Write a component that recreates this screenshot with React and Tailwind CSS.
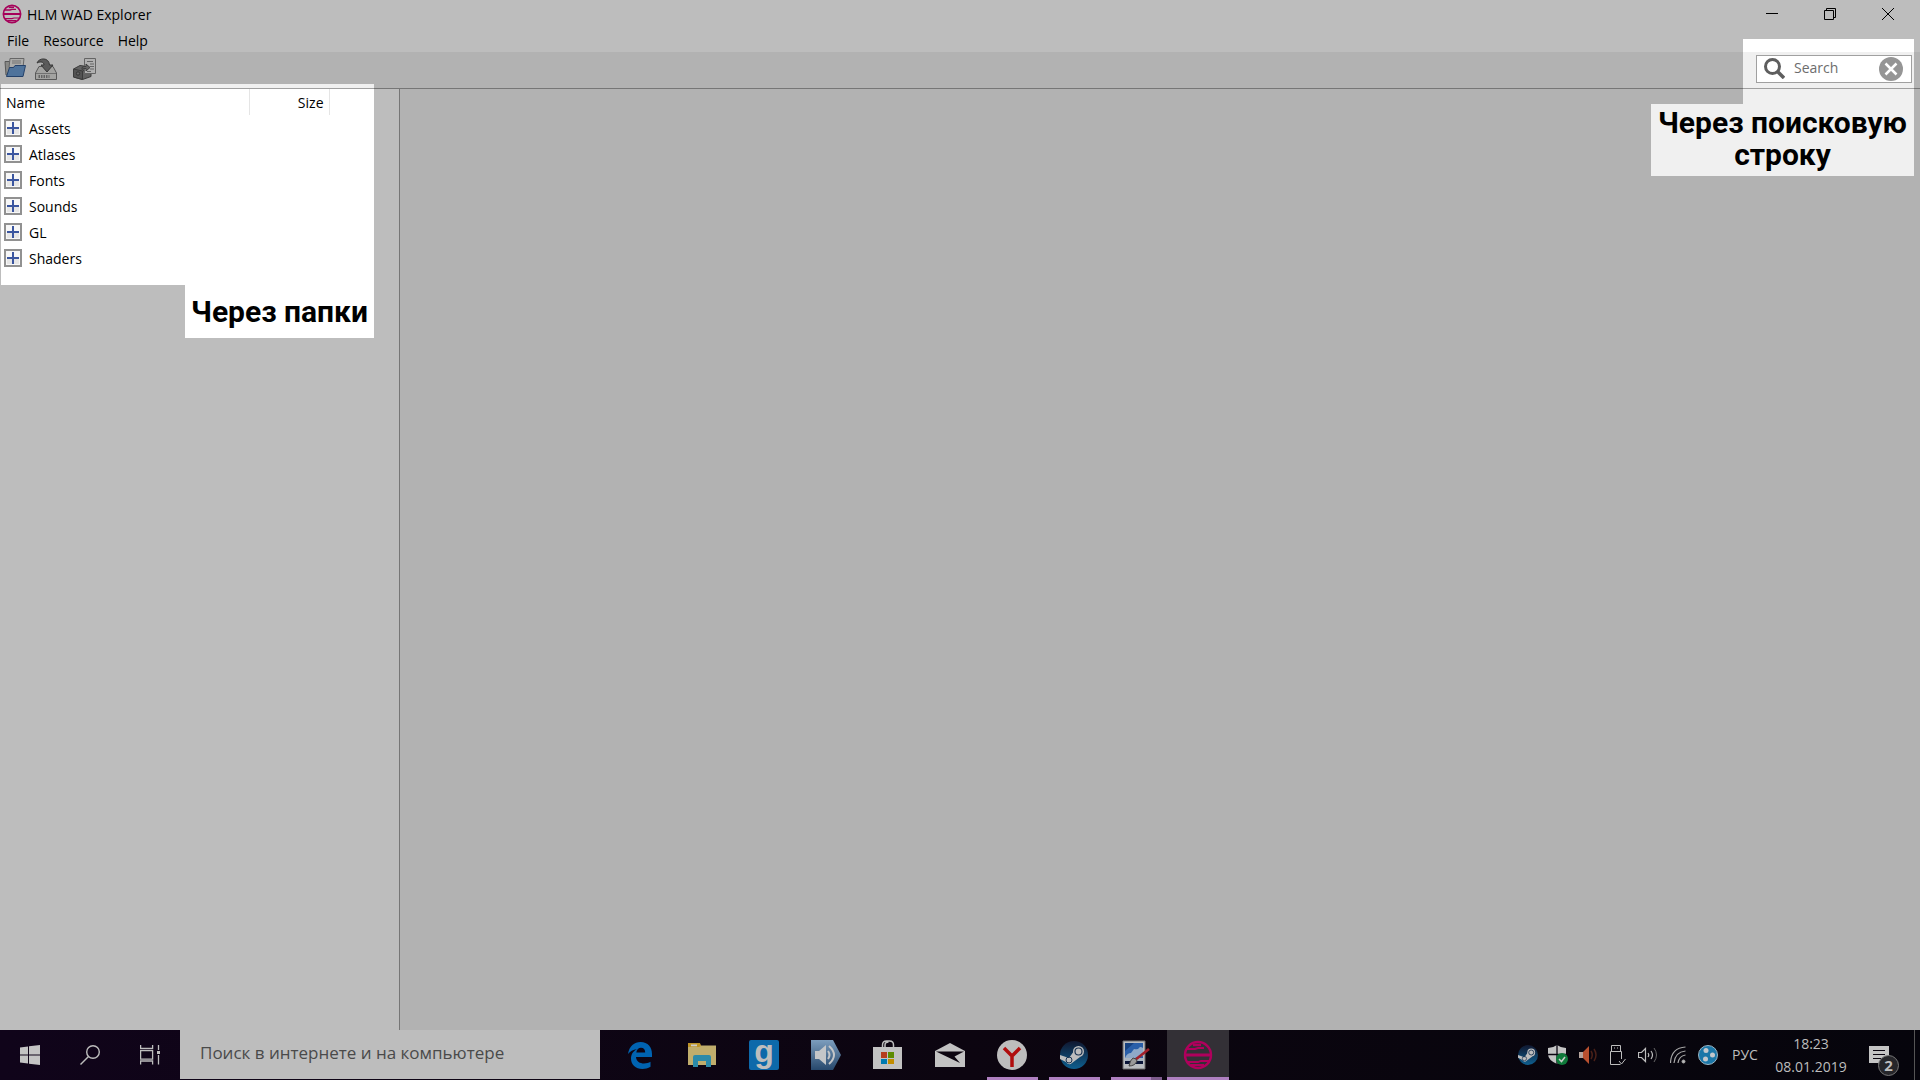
import React, { useState } from "react";

const folders = ["Assets", "Atlases", "Fonts", "Sounds", "GL", "Shaders"];

const LogoIcon = ({ className }) => (
  <svg viewBox="0 0 30 30" className={className} fill="none" stroke="currentColor">
    <circle cx="15" cy="15" r="13" strokeWidth="2.4" />
    <path d="M2 15h26" strokeWidth="3" />
    <path d="M4 9h8l3-1h6" strokeWidth="2" />
    <path d="M10 5h8" strokeWidth="2.4" />
    <path d="M4 22h11l3-1h8M8 25h13" strokeWidth="1.8" />
  </svg>
);

const OpenIcon = () => (
  <svg viewBox="0 0 22 20" className="h-5 w-[22px]">
    <path d="M1 3.500h6l1 2V17H2z" fill="#b9b9b5" stroke="#777" />
    <path d="M6 .5h14l-1 9H5z" fill="#e8e8e6" stroke="#8a8a8a" />
    <path d="M8 3h9M8 5h9" stroke="#999" />
    <path d="M5.500 9.500h4l1.500-2h10.500L19 18.500H2.500z" fill="#6b9bd2" stroke="#31588f" />
  </svg>
);

const SaveIcon = () => (
  <svg viewBox="0 0 22 22" className="size-[22px]">
    <path d="M4 8.500h14l3.500 6.500v6.500H.5V15z" fill="#dcdcda" stroke="#777" />
    <path d="M1 15.500h20" stroke="#999" />
    <path d="M3.500 18.500h11" stroke="#888" strokeWidth="3" strokeDasharray="1.500 1" />
    <path d="M2 5C4-.5 14-1 14.500 7H18l-6 7-6-7h3C9 4 6 3 2 5z" fill="#7b7b7b" stroke="#4c4c4c" />
  </svg>
);

const ExtractIcon = () => (
  <svg viewBox="0 0 23 22" className="h-[22px] w-[23px]">
    <path d="M.5 11L7 7.500l11 1.500v9.500L9.500 21.500.5 19z" fill="#858585" stroke="#505050" />
    <path d="M.5 11l9 2v8.500l-9-2.500z" fill="#707070" stroke="#505050" />
    <path d="M9.500 13L18 10.500" stroke="#505050" />
    <circle cx="5" cy="15.500" r="1.700" fill="#8a8a8a" stroke="#444" />
    <path d="M11.500.5h11v15h-11z" fill="#eee" stroke="#888" />
    <path d="M14 3.500h6M17 6h4M17 8.500h4M17 11h4M14 13.500h4" stroke="#888" />
    <path d="M9 9.500q2-1.500 4-1V6l4 3.500-4 3.500v-2.500q-2-.5-4 1z" fill="#888" stroke="#555" />
  </svg>
);

const PlusBox = () => (
  <svg viewBox="0 0 18 18" className="size-[18px]">
    <rect x="1" y="1" width="16" height="16" fill="#f7f7f7" stroke="#919191" strokeWidth="2" />
    <path d="M3 10h12v5H3z" fill="#e6e6e6" />
    <path d="M3 9h12M9 3v12" stroke="#3a559f" strokeWidth="2" />
  </svg>
);

const EdgeIcon = () => (
  <svg viewBox="0 0 24 27" className="h-[27px] w-6" fill="#0063b1">
    <path d="M0 12C1 4 6.500 0 12.500 0 20 0 24 5 24 12v3H8c.3 4.500 4 6.500 8 6.500 2.500 0 4.800-.7 6.500-1.700v5C20 26.300 17 27 14.500 27 7.500 27 3 22.500 3 16.500c0-4.500 2.500-7.500 6-9.500C5 7.500 2 9.500 0 12zm8.300-1.500h8.900c0-3-1.500-4.700-4.200-4.700-2.500 0-4.200 1.700-4.700 4.700z" />
  </svg>
);

const FolderIcon = () => (
  <svg viewBox="0 0 28 24" className="h-6 w-7">
    <path d="M0 0h11l2 2.500h15V22H0z" fill="#c0ad6c" />
    <path d="M0 0h12l1 3-2 1H0z" fill="#bd9327" />
    <path d="M3 1.500h6v1.800H3z" fill="#ccc" />
    <path d="M5 24V14q0-2 2-2h14q2 0 2 2v10h-5v-6h-8v6z" fill="#2b8aa9" />
  </svg>
);

const GmodIcon = () => (
  <span className="flex size-[30px] items-center justify-center rounded-xs bg-[#0d69aa] pb-2 font-['Liberation_Sans',sans-serif] text-[32px] leading-none font-bold text-[#bdbdbd]">
    g
  </span>
);

const VoiceIcon = () => (
  <svg viewBox="0 0 30 30" className="size-[30px]">
    <defs>
      <linearGradient id="voice" x1="0" y1="0" x2="0" y2="1">
        <stop offset="0" stopColor="#7c9dbd" />
        <stop offset="1" stopColor="#27486c" />
      </linearGradient>
    </defs>
    <path d="M0 0h22l8 15-8 15H0z" fill="url(#voice)" />
    <path d="M4 11h4l7-6v20l-7-6H4z" fill="#c4c6c8" />
    <path d="M17 11q3 4 0 8M18 6q10 9 0 18" fill="none" stroke="#c4c6c8" strokeWidth="2" />
  </svg>
);

const StoreIcon = () => (
  <svg viewBox="0 0 30 30" className="size-[30px]">
    <path d="M9.500 8V5q0-4 4-4h3q4 0 4 4v3M12 8V5q0-3 3.500-3" fill="none" stroke="#bdbdbd" strokeWidth="1.500" />
    <path d="M0 7h29v22H0z" fill="#c2c2c2" />
    <path d="M8 12h6v6H8z" fill="#b63c1d" />
    <path d="M15 12h6v6h-6z" fill="#5d8b00" />
    <path d="M8 19h6v5H8z" fill="#007ab0" />
    <path d="M15 19h6v5h-6z" fill="#c28c00" />
  </svg>
);

const MailIcon = () => (
  <svg viewBox="0 0 30 24" className="h-6 w-[30px]">
    <path d="M0 8L15 0l15 8v16H0z" fill="#c2c2c2" />
    <path d="M1 8.500h28l-9.500 5L25 20 1 8.500z" fill="#0c0510" />
  </svg>
);

const YandexIcon = () => (
  <svg viewBox="0 0 30 30" className="size-[30px]">
    <circle cx="15" cy="15" r="15" fill="#bdbdbd" />
    <path d="M7 8l8 8 8-8M15 15v12" fill="none" stroke="#b00d0d" strokeWidth="3.500" />
  </svg>
);

const SteamIcon = ({ className }) => (
  <svg viewBox="0 0 28 28" className={className}>
    <defs>
      <linearGradient id="steam" x1="0" y1="0" x2="0" y2="1">
        <stop offset="0" stopColor="#10172f" />
        <stop offset="1" stopColor="#0e5f8f" />
      </linearGradient>
    </defs>
    <circle cx="14" cy="14" r="14" fill="url(#steam)" />
    <path d="M0 14l9 3 5-7 6 6-8 6q-3 3-6-1l-6-3z" fill="#bdbdbd" />
    <circle cx="18.500" cy="10.500" r="5.500" fill="#bdbdbd" />
    <circle cx="18.500" cy="10.500" r="3.500" fill="#bdbdbd" stroke="#1a3352" strokeWidth="1.200" />
    <circle cx="9" cy="19" r="3" fill="none" stroke="#1a3352" />
  </svg>
);

const PaintIcon = () => (
  <svg viewBox="0 0 28 30" className="h-[30px] w-7">
    <path d="M1 1h22v28H1z" fill="#b9bcc0" stroke="#6c6c6c" />
    <path d="M3 3h18v18H3z" fill="#2a5fa8" />
    <path d="M3 3h9L3 11z" fill="#16417f" />
    <path d="M3 18q2-5 6-5l3-4q4 1 5-1t4 0v8q-5 0-8 2t-10 2z" fill="#8fa9c8" />
    <path d="M3 18h18v3H3z" fill="#a8b4c0" />
    <path d="M3 21h18v3H3z" fill="#0a1538" />
    <path d="M27 9L13 20" stroke="#a3202b" strokeWidth="2.600" />
    <path d="M14 19l-3-1q-3 2-4 8 6 0 8-5z" fill="#999" stroke="#444" />
  </svg>
);

const apps = [
  { name: "Edge", icon: <EdgeIcon /> },
  { name: "Explorer", icon: <FolderIcon /> },
  { name: "Garry's Mod", icon: <GmodIcon /> },
  { name: "Voice", icon: <VoiceIcon /> },
  { name: "Store", icon: <StoreIcon /> },
  { name: "Mail", icon: <MailIcon /> },
  { name: "Yandex", icon: <YandexIcon />, open: true },
  { name: "Steam", icon: <SteamIcon className="size-7" />, open: true },
  { name: "Paint", icon: <PaintIcon />, open: true, stacked: true },
  { name: "HLM WAD Explorer", icon: <LogoIcon className="size-[30px] text-[#b0005c]" />, active: true },
];

const trayIcons = [
  { name: "Steam", icon: <SteamIcon className="size-5" /> },
  {
    name: "Security",
    icon: (
      <svg viewBox="0 0 20 20" className="size-5">
        <path d="M0 3q5 0 9-3 4 3 9 3v6q0 6-9 10Q0 15 0 9z" fill="#c4c4c4" />
        <path d="M9 0v19M0 9.500h18" stroke="#0a0510" strokeWidth="1.300" />
        <circle cx="14" cy="14" r="6" fill="#0f7a3a" />
        <path d="M11 14l2.500 2.500L17 12" fill="none" stroke="#ccc" strokeWidth="1.500" />
      </svg>
    ),
  },
  {
    name: "Sound manager",
    icon: (
      <svg viewBox="0 0 20 20" className="size-5" fill="none">
        <path d="M1 7h4l6-6v18l-6-6H1z" fill="#b9502f" />
        <path d="M1 7h4v6H1z" fill="#b5a39c" />
        <path d="M13 6q2.500 4 0 8M16 4q4 6 0 12" stroke="#4a2018" strokeWidth="1.500" />
      </svg>
    ),
  },
  {
    name: "USB",
    icon: (
      <svg viewBox="0 0 16 20" className="h-5 w-4" fill="none" stroke="#bdbdbd">
        <path d="M1.500 6.500v-6h9v6M11.500 14V6.500H.5v13h10M4 3h1M7 3h1M9 16l2.500 3 4-5" />
      </svg>
    ),
  },
  {
    name: "Volume",
    icon: (
      <svg viewBox="0 0 20 20" className="size-5" fill="none" stroke="#bdbdbd">
        <path d="M.5 7.500h3l4-4v13l-4-4h-3zM10 8q1.500 2 0 4M13 6q3 4 0 8" strokeWidth="1.200" />
        <path d="M16 3q5 7 0 14" stroke="#666" />
      </svg>
    ),
  },
  {
    name: "Network",
    icon: (
      <svg viewBox="0 0 16 18" className="h-[18px] w-4" fill="none" stroke="#a8a8a8">
        <path d="M.5 17Q1 2 15.500 1M4 17Q5 6 15.500 5M8 17q1-7 7.500-8" strokeWidth="1.200" />
        <circle cx="13.500" cy="15.500" r="1.500" fill="#bdbdbd" />
      </svg>
    ),
  },
  {
    name: "Hamachi",
    icon: (
      <svg viewBox="0 0 20 20" className="size-5">
        <circle cx="10" cy="10" r="9.500" fill="#1b77a8" stroke="#9ab4c2" />
        <circle cx="8" cy="5.500" r="2.500" fill="#c4c8cc" />
        <circle cx="14.500" cy="10" r="2.500" fill="#c4c8cc" />
        <circle cx="7.500" cy="14" r="2.500" fill="#c4c8cc" />
      </svg>
    ),
  },
];

const TitleBar = () => (
  <header className="flex h-7 items-center bg-white pl-[2px]">
    <LogoIcon className="size-5 text-[#e0007a]" />
    <h1 className="ml-[5px] flex-1 pt-px text-sm">HLM WAD Explorer</h1>
    <div className="flex pr-[3px]">
      <button aria-label="Minimize" className="flex h-7 w-[58px] items-center justify-center">
        <svg viewBox="0 0 12 12" className="size-3" stroke="#000">
          <path d="M0 5.500h12" />
        </svg>
      </button>
      <button aria-label="Restore" className="flex h-7 w-[58px] items-center justify-center">
        <svg viewBox="0 0 12 12" className="size-3" fill="none" stroke="#000">
          <path d="M.5 2.500h9v9h-9zM2.500 2.500v-2h9v9h-2" />
        </svg>
      </button>
      <button aria-label="Close" className="flex h-7 w-[58px] items-center justify-center">
        <svg viewBox="0 0 12 12" className="size-3" stroke="#000">
          <path d="M0 0l12 12M12 0L0 12" />
        </svg>
      </button>
    </div>
  </header>
);

const Toolbar = () => {
  const [query, setQuery] = useState("");

  return (
    <div className="flex h-9 items-center bg-[#f0f0f0] pb-[2px] pl-1">
      <button aria-label="Open" className="pb-[2px]">
        <OpenIcon />
      </button>
      <button aria-label="Save" className="ml-[9px]">
        <SaveIcon />
      </button>
      <button aria-label="Extract" className="ml-4">
        <ExtractIcon />
      </button>
      <div className="mr-2 ml-auto flex h-7 w-[156px] items-center border border-[#a0a0a0] bg-white pr-2 pl-[7px]">
        <svg viewBox="0 0 21 21" className="mb-[2px] size-[21px] shrink-0" fill="none" stroke="#5e5e5e">
          <circle cx="8.500" cy="8.500" r="7" strokeWidth="3" />
          <path d="M13.500 13.500l6.500 6.500" strokeWidth="3.500" />
        </svg>
        <input
          type="text"
          aria-label="Search"
          placeholder="Search"
          value={query}
          onChange={(e) => setQuery(e.target.value)}
          className="ml-[9px] w-0 flex-1 bg-transparent pb-[2px] text-sm outline-none placeholder:text-[#6d6d6d]"
        />
        <button aria-label="Clear" onClick={() => setQuery("")}>
          <svg viewBox="0 0 24 24" className="size-6">
            <circle cx="12" cy="12" r="12" fill="#959595" />
            <path d="M6.500 6.500l11 11M17.500 6.500l-11 11" stroke="#fff" strokeWidth="2.500" />
          </svg>
        </button>
      </div>
    </div>
  );
};

const FolderTree = () => (
  <aside className="w-[400px] border-r border-[#a0a0a0] bg-white pl-px">
    <table className="w-full table-fixed text-sm">
      <thead>
        <tr className="h-[26px]">
          <th className="w-[248px] border-r border-[#e5e5e5] pt-[2px] pl-[5px] text-left font-normal">Name</th>
          <th className="w-20 border-r border-[#e5e5e5] pt-[2px] pr-[5px] text-right font-normal">Size</th>
          <th></th>
        </tr>
      </thead>
      <tbody>
        {folders.map((name) => (
          <tr key={name} className="h-[26px]">
            <td colSpan={3}>
              <button className="flex items-center gap-[7px] pl-[3px]">
                <PlusBox />
                <span className="pt-px">{name}</span>
              </button>
            </td>
          </tr>
        ))}
      </tbody>
    </table>
  </aside>
);

const Taskbar = () => (
  <footer className="flex h-[50px] bg-linear-to-r from-[#10041a] via-[#0c0510] to-[#06050c] text-[#bdbdbd]">
    <button aria-label="Start" className="flex w-[60px] items-center justify-center">
      <svg viewBox="0 0 20 20" className="size-5" fill="#c4c4c4">
        <path d="M0 2.500L8 1.400V9.500H0zM9 1.200L20 0v9.500H9zM0 10.500h8v8.100L0 17.500zM9 10.500h11V20L9 18.800z" />
      </svg>
    </button>
    <button aria-label="Find" className="flex w-[60px] items-center justify-center">
      <svg viewBox="0 0 20 20" className="size-5" fill="none" stroke="#bdbdbd" strokeWidth="1.400">
        <circle cx="13" cy="7" r="6.300" />
        <path d="M8.500 11.500L.5 19.500" />
      </svg>
    </button>
    <button aria-label="Task view" className="flex w-[60px] items-center justify-center">
      <svg viewBox="0 0 20 20" className="size-5" fill="none" stroke="#bdbdbd" strokeWidth="1.300">
        <path d="M.6 0v3.500h12V0M.6 5.600h12v8.500H.6zM.6 19.500V16h12v3.500M18.500 0v5M18.500 10v9.500" />
        <path d="M17 6h3v3h-3z" fill="#bdbdbd" stroke="none" />
      </svg>
    </button>
    <input
      type="text"
      aria-label="Поиск"
      placeholder="Поиск в интернете и на компьютере"
      className="mb-px w-[420px] bg-[#bdbdbd] px-5 pb-1 text-[17px] outline-none placeholder:text-[#4a4a4a]"
    />
    <nav className="ml-[9px] flex">
      {apps.map((app) => (
        <button
          key={app.name}
          aria-label={app.name}
          className={`flex w-[62px] flex-col items-center ${app.active ? "bg-[#333036]" : ""}`}
        >
          <span className="flex h-[47px] items-center justify-center pt-[3px]">{app.icon}</span>
          {app.active && <span className="h-[3px] w-full bg-[#ae7fc0]" />}
          {app.open && (
            <span className="flex h-[3px] w-[51px] bg-[#ae7fc0]">
              {app.stacked && <span className="ml-auto w-[11px] bg-[#7d5b8c]" />}
            </span>
          )}
        </button>
      ))}
    </nav>
    <div className="ml-auto flex items-center">
      {trayIcons.map((item) => (
        <button key={item.name} aria-label={item.name} className="flex w-[30px] justify-center">
          {item.icon}
        </button>
      ))}
      <span className="w-11 text-center text-sm">РУС</span>
      <div className="w-[88px] text-center text-sm leading-[23px]">
        <p>18:23</p>
        <p>08.01.2019</p>
      </div>
      <button aria-label="Notifications" className="mr-[15px] mb-1 ml-[14px] self-end">
        <svg viewBox="0 0 30 30" className="size-[30px]">
          <path d="M0 0h20v17h-7v4l-4-4H0z" fill="#c4c4c4" />
          <path d="M4 4.500h12M4 8.500h12M4 12.500h8" stroke="#0a0510" />
          <circle cx="19.500" cy="19.500" r="10" fill="#26262a" stroke="#777" />
          <text x="19.500" y="25" textAnchor="middle" fontSize="15" fontWeight="700" fill="#bdbdbd">
            2
          </text>
        </svg>
      </button>
      <span className="mr-[5px] h-[50px] w-px bg-[#555]" />
    </div>
  </footer>
);

// Darkens the window except for the folder list and the search box
const Dimmer = () => (
  <div className="pointer-events-none absolute inset-0 bg-black/26 [clip-path:polygon(evenodd,0_0,100%_0,100%_100%,0_100%,0_0,1px_84px,374px_84px,374px_338px,185px_338px,185px_285px,1px_285px,1px_84px,0_0,calc(100%-177px)_39px,calc(100%-6px)_39px,calc(100%-6px)_176px,calc(100%-269px)_176px,calc(100%-269px)_104px,calc(100%-177px)_104px,calc(100%-177px)_39px,0_0)]" />
);

const App = () => {
  return (
    <div className="flex min-h-screen flex-col font-['Open_Sans','Noto_Sans',sans-serif] text-black">
      <div className="relative flex flex-1 flex-col">
        <TitleBar />
        <nav className="flex h-6 items-center gap-[14px] bg-white pt-[2px] pl-[7px] text-sm leading-6">
          <button>File</button>
          <button>Resource</button>
          <button>Help</button>
        </nav>
        <Toolbar />
        <main className="flex flex-1 border-t border-[#a0a0a0]">
          <FolderTree />
          <section className="flex-1 bg-[#f0f0f0]" />
        </main>
        <Dimmer />
        <p className="absolute top-[285px] left-[185px] flex h-[53px] w-[189px] items-center justify-center font-[Roboto,sans-serif] text-[30px] font-bold whitespace-nowrap">
          Через папки
        </p>
        <p className="absolute top-[104px] right-[6px] w-[263px] pt-[3px] text-center font-[Roboto,sans-serif] text-[30px] leading-8 font-bold">
          Через поисковую строку
        </p>
      </div>
      <Taskbar />
    </div>
  );
};

export default App;
